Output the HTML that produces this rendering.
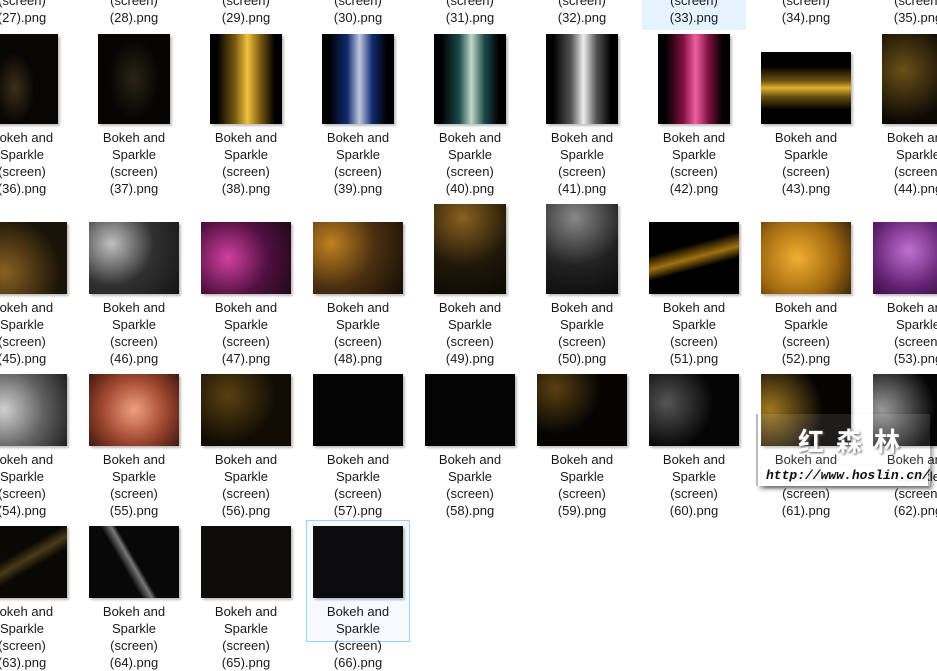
<!DOCTYPE html>
<html><head><meta charset="utf-8"><style>
body{margin:0;width:937px;height:637px;overflow:hidden;background:#fff;position:relative;font-family:"Liberation Sans","Noto Sans CJK SC",sans-serif;font-size:13px;color:#1a1a1a}
.c{position:absolute;width:104px;text-align:center}
.a{height:90px;display:flex;align-items:flex-end;justify-content:center}
.p{width:72px;height:90px;box-shadow:2px 2px 2px rgba(0,0,0,.25);background:#000}
.l{width:90px;height:72px;box-shadow:2px 2px 2px rgba(0,0,0,.25);background:#000}
.x{margin-top:5px;line-height:17px}
.sel{position:absolute;left:642px;top:0;width:104px;height:30px;background:#e5f3ff}
.hov{position:absolute;left:306px;top:520px;width:102px;height:120px;border:1px solid #99d1ff;background:#f4faff}
.wm{position:absolute;left:756px;top:414px;width:172px;height:72px;background:rgba(255,255,255,.1);box-shadow:3px 3px 4px rgba(0,0,0,.35);border-left:2px solid #bbb}
</style></head><body>
<div class="sel"></div>
<div class="hov"></div>

<div class="c" style="left:-30px;top:-8px"><div style="line-height:17px">(screen)<br>(27).png</div></div>
<div class="c" style="left:82px;top:-8px"><div style="line-height:17px">(screen)<br>(28).png</div></div>
<div class="c" style="left:194px;top:-8px"><div style="line-height:17px">(screen)<br>(29).png</div></div>
<div class="c" style="left:306px;top:-8px"><div style="line-height:17px">(screen)<br>(30).png</div></div>
<div class="c" style="left:418px;top:-8px"><div style="line-height:17px">(screen)<br>(31).png</div></div>
<div class="c" style="left:530px;top:-8px"><div style="line-height:17px">(screen)<br>(32).png</div></div>
<div class="c" style="left:642px;top:-8px"><div style="line-height:17px">(screen)<br>(33).png</div></div>
<div class="c" style="left:754px;top:-8px"><div style="line-height:17px">(screen)<br>(34).png</div></div>
<div class="c" style="left:866px;top:-8px"><div style="line-height:17px">(screen)<br>(35).png</div></div>

<div class="c" style="left:-30px;top:34px"><div class="a"><div class="p" style="background:radial-gradient(ellipse 20px 35px at 40% 60%,#3a3018,#080604)"></div></div><div class="x">Bokeh and<br>Sparkle<br>(screen)<br>(36).png</div></div>
<div class="c" style="left:82px;top:34px"><div class="a"><div class="p" style="background:radial-gradient(ellipse 25px 40px at 50% 50%,#2a2414,#060504)"></div></div><div class="x">Bokeh and<br>Sparkle<br>(screen)<br>(37).png</div></div>
<div class="c" style="left:194px;top:34px"><div class="a"><div class="p" style="background:linear-gradient(90deg,#000 10%,#7a5a10 35%,#f0c040 52%,#7a5a10 70%,#000 90%)"></div></div><div class="x">Bokeh and<br>Sparkle<br>(screen)<br>(38).png</div></div>
<div class="c" style="left:306px;top:34px"><div class="a"><div class="p" style="background:linear-gradient(90deg,#000 10%,#102a70 35%,#c0c8e0 52%,#102a70 70%,#000 90%)"></div></div><div class="x">Bokeh and<br>Sparkle<br>(screen)<br>(39).png</div></div>
<div class="c" style="left:418px;top:34px"><div class="a"><div class="p" style="background:linear-gradient(90deg,#000 10%,#1a4a4a 35%,#c0d8c8 52%,#1a4a4a 70%,#000 90%)"></div></div><div class="x">Bokeh and<br>Sparkle<br>(screen)<br>(40).png</div></div>
<div class="c" style="left:530px;top:34px"><div class="a"><div class="p" style="background:linear-gradient(90deg,#000 10%,#555 35%,#eee 52%,#555 70%,#000 90%)"></div></div><div class="x">Bokeh and<br>Sparkle<br>(screen)<br>(41).png</div></div>
<div class="c" style="left:642px;top:34px"><div class="a"><div class="p" style="background:linear-gradient(90deg,#000 10%,#801040 35%,#f060a0 52%,#801040 70%,#000 90%)"></div></div><div class="x">Bokeh and<br>Sparkle<br>(screen)<br>(42).png</div></div>
<div class="c" style="left:754px;top:34px"><div class="a"><div class="l" style="background:linear-gradient(180deg,#000 20%,#6a5010 40%,#e0b030 50%,#6a5010 62%,#000 80%)"></div></div><div class="x">Bokeh and<br>Sparkle<br>(screen)<br>(43).png</div></div>
<div class="c" style="left:866px;top:34px"><div class="a"><div class="p" style="background:radial-gradient(circle at 30% 40%,#6a5018,#0c0904 70%)"></div></div><div class="x">Bokeh and<br>Sparkle<br>(screen)<br>(44).png</div></div>

<div class="c" style="left:-30px;top:204px"><div class="a"><div class="l" style="background:radial-gradient(circle at 30% 70%,#8a6020,#1a1408 70%)"></div></div><div class="x">Bokeh and<br>Sparkle<br>(screen)<br>(45).png</div></div>
<div class="c" style="left:82px;top:204px"><div class="a"><div class="l" style="background:radial-gradient(circle at 25% 30%,#c0c0c0,#303030 50%,#151515)"></div></div><div class="x">Bokeh and<br>Sparkle<br>(screen)<br>(46).png</div></div>
<div class="c" style="left:194px;top:204px"><div class="a"><div class="l" style="background:radial-gradient(circle at 30% 50%,#d040a0,#501040 55%,#200818)"></div></div><div class="x">Bokeh and<br>Sparkle<br>(screen)<br>(47).png</div></div>
<div class="c" style="left:306px;top:204px"><div class="a"><div class="l" style="background:radial-gradient(circle at 20% 30%,#c08020,#4a3010 50%,#140c04)"></div></div><div class="x">Bokeh and<br>Sparkle<br>(screen)<br>(48).png</div></div>
<div class="c" style="left:418px;top:204px"><div class="a"><div class="p" style="background:radial-gradient(circle at 40% 15%,#8a6020,#201808 55%,#0a0804)"></div></div><div class="x">Bokeh and<br>Sparkle<br>(screen)<br>(49).png</div></div>
<div class="c" style="left:530px;top:204px"><div class="a"><div class="p" style="background:radial-gradient(circle at 40% 15%,#888,#222 55%,#0a0a0a)"></div></div><div class="x">Bokeh and<br>Sparkle<br>(screen)<br>(50).png</div></div>
<div class="c" style="left:642px;top:204px"><div class="a"><div class="l" style="background:linear-gradient(165deg,#000 35%,#a07010 50%,#000 62%)"></div></div><div class="x">Bokeh and<br>Sparkle<br>(screen)<br>(51).png</div></div>
<div class="c" style="left:754px;top:204px"><div class="a"><div class="l" style="background:radial-gradient(circle at 40% 50%,#f0b030,#a06810 60%,#402808)"></div></div><div class="x">Bokeh and<br>Sparkle<br>(screen)<br>(52).png</div></div>
<div class="c" style="left:866px;top:204px"><div class="a"><div class="l" style="background:radial-gradient(circle at 40% 40%,#c070d0,#602070 55%,#200828)"></div></div><div class="x">Bokeh and<br>Sparkle<br>(screen)<br>(53).png</div></div>

<div class="c" style="left:-30px;top:356px"><div class="a"><div class="l" style="background:radial-gradient(circle at 30% 50%,#d0d0d0,#606060 55%,#202020)"></div></div><div class="x">Bokeh and<br>Sparkle<br>(screen)<br>(54).png</div></div>
<div class="c" style="left:82px;top:356px"><div class="a"><div class="l" style="background:radial-gradient(circle at 50% 50%,#f0a080,#a04830 55%,#401810)"></div></div><div class="x">Bokeh and<br>Sparkle<br>(screen)<br>(55).png</div></div>
<div class="c" style="left:194px;top:356px"><div class="a"><div class="l" style="background:radial-gradient(circle at 30% 30%,#5a4010,#100c04 60%)"></div></div><div class="x">Bokeh and<br>Sparkle<br>(screen)<br>(56).png</div></div>
<div class="c" style="left:306px;top:356px"><div class="a"><div class="l" style="background:#050505"></div></div><div class="x">Bokeh and<br>Sparkle<br>(screen)<br>(57).png</div></div>
<div class="c" style="left:418px;top:356px"><div class="a"><div class="l" style="background:#050505"></div></div><div class="x">Bokeh and<br>Sparkle<br>(screen)<br>(58).png</div></div>
<div class="c" style="left:530px;top:356px"><div class="a"><div class="l" style="background:radial-gradient(circle at 20% 20%,#5a4010,#050403 50%)"></div></div><div class="x">Bokeh and<br>Sparkle<br>(screen)<br>(59).png</div></div>
<div class="c" style="left:642px;top:356px"><div class="a"><div class="l" style="background:radial-gradient(circle at 20% 40%,#555,#050505 55%)"></div></div><div class="x">Bokeh and<br>Sparkle<br>(screen)<br>(60).png</div></div>
<div class="c" style="left:754px;top:356px"><div class="a"><div class="l" style="background:radial-gradient(circle at 10% 50%,#a07820,#050403 60%)"></div></div><div class="x">Bokeh and<br>Sparkle<br>(screen)<br>(61).png</div></div>
<div class="c" style="left:866px;top:356px"><div class="a"><div class="l" style="background:radial-gradient(circle at 10% 50%,#999,#050505 60%)"></div></div><div class="x">Bokeh and<br>Sparkle<br>(screen)<br>(62).png</div></div>

<div class="c" style="left:-30px;top:508px"><div class="a"><div class="l" style="background:linear-gradient(150deg,#0a0805 40%,#4a3a18 50%,#0a0805 60%)"></div></div><div class="x">Bokeh and<br>Sparkle<br>(screen)<br>(63).png</div></div>
<div class="c" style="left:82px;top:508px"><div class="a"><div class="l" style="background:linear-gradient(60deg,#080808 40%,#777 48%,#080808 52%),#080808"></div></div><div class="x">Bokeh and<br>Sparkle<br>(screen)<br>(64).png</div></div>
<div class="c" style="left:194px;top:508px"><div class="a"><div class="l" style="background:#0e0c08"></div></div><div class="x">Bokeh and<br>Sparkle<br>(screen)<br>(65).png</div></div>
<div class="c" style="left:306px;top:508px"><div class="a"><div class="l" style="background:#0c0c0e"></div></div><div class="x">Bokeh and<br>Sparkle<br>(screen)<br>(66).png</div></div>

<div class="wm">
<div style="position:absolute;left:40px;top:12px;font-size:26px;font-weight:bold;color:#fff;text-shadow:1px 1px 2px #666;letter-spacing:12px;font-family:'Noto Sans CJK SC',sans-serif;line-height:30px">红森林</div>
<div style="position:absolute;left:4px;top:52px;width:166px;height:20px;background:rgba(255,255,255,.9);box-shadow:2px 2px 3px rgba(0,0,0,.35)"></div>
<div style="position:absolute;left:8px;top:54px;font-size:13px;font-style:italic;font-weight:bold;color:#111;font-family:'Liberation Mono',monospace">http://www.hoslin.cn/</div>
</div>
</body></html>
